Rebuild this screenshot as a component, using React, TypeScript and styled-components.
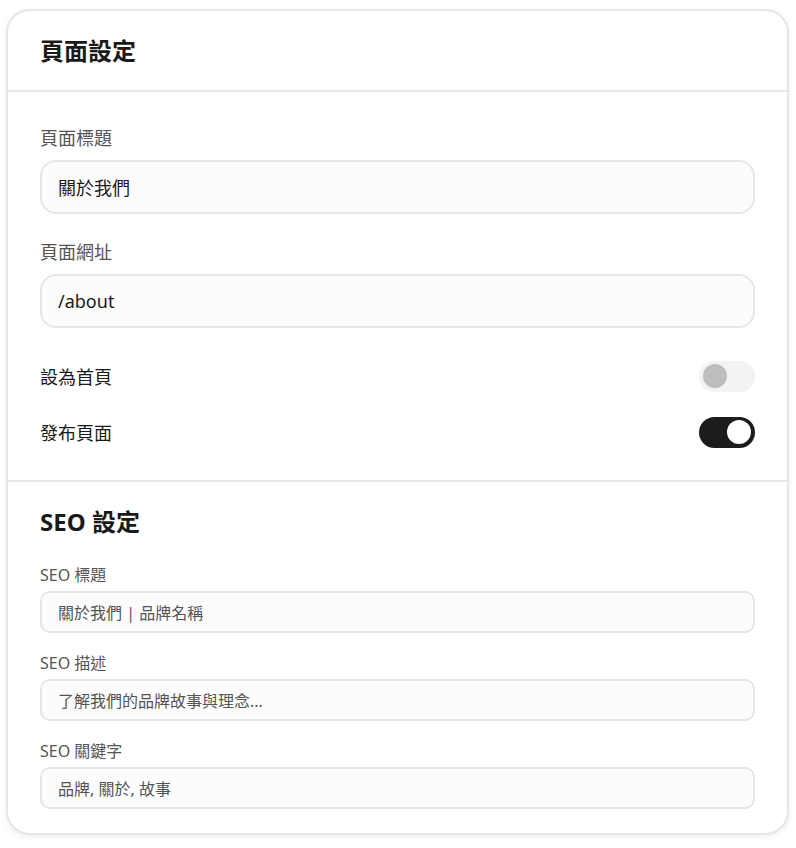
import React, { useState } from 'react'
import styled, { createGlobalStyle } from 'styled-components'

const GlobalStyle = createGlobalStyle`
  html, body {
    margin: 0;
    padding: 0;
    background: #ffffff;
  }
  body {
    font-family: 'Noto Sans', 'Noto Sans CJK TC', sans-serif;
    color: #1a1a1a;
  }
  * {
    box-sizing: border-box;
  }
`

const Page = styled.div`
  padding: 9px 7px 14px 6px;
`

const Card = styled.div`
  background: #ffffff;
  border: 2px solid #e6e6e6;
  border-radius: 24px;
  box-shadow: 0 2px 6px rgba(0, 0, 0, 0.07);
  overflow: hidden;
`

const Header = styled.div`
  padding: 24px 32px;
  border-bottom: 2px solid #e6e6e6;
`

const Title = styled.h2`
  margin: 0;
  font-size: 24px;
  line-height: 31px;
  font-weight: 700;
  color: #1a1a1a;
`

const Section = styled.div<{ $compact?: boolean }>`
  display: flex;
  flex-direction: column;
  padding: ${(p) => (p.$compact ? '24px 32px 24px' : '32px 32px')};
  & + & {
    border-top: 2px solid #e6e6e6;
  }
`

const SectionTitle = styled(Title)`
  margin-bottom: 28px;
`

const Field = styled.div<{ $compact?: boolean }>`
  display: flex;
  flex-direction: column;
  gap: ${(p) => (p.$compact ? '6px' : '8px')};
  margin-bottom: ${(p) => (p.$compact ? '20px' : '24px')};
  &:last-child {
    margin-bottom: 0;
  }
`

const Label = styled.label<{ $compact?: boolean }>`
  font-size: ${(p) => (p.$compact ? '16px' : '18px')};
  line-height: ${(p) => (p.$compact ? '20px' : '28px')};
  color: #555555;
`

const Input = styled.input<{ $compact?: boolean }>`
  width: 100%;
  height: ${(p) => (p.$compact ? '42px' : '54px')};
  padding: 0 16px;
  border: 2px solid #e6e6e6;
  border-radius: ${(p) => (p.$compact ? '10px' : '16px')};
  background: #fcfcfc;
  font-family: inherit;
  font-size: ${(p) => (p.$compact ? '16px' : '18px')};
  color: ${(p) => (p.$compact ? '#555555' : '#1a1a1a')};
  outline: none;
`

const ToggleList = styled.div`
  display: flex;
  flex-direction: column;
  gap: 24px;
  margin-top: 8px;
`

const ToggleRow = styled.div`
  display: flex;
  align-items: center;
  justify-content: space-between;
  height: 32px;
`

const RowLabel = styled.span`
  font-size: 18px;
  color: #1a1a1a;
`

const Track = styled.button<{ $on: boolean }>`
  position: relative;
  width: 56px;
  height: 31px;
  padding: 0;
  border: none;
  border-radius: 16px;
  background: ${(p) => (p.$on ? '#1c1c1c' : '#f3f3f3')};
  cursor: pointer;
`

const Knob = styled.span<{ $on: boolean }>`
  position: absolute;
  top: 3.5px;
  left: ${(p) => (p.$on ? '28px' : '4px')};
  width: 24px;
  height: 24px;
  border-radius: 50%;
  background: ${(p) => (p.$on ? '#ffffff' : '#bdbdbd')};
`

const Toggle = ({ initial }: { initial: boolean }) => {
  const [on, setOn] = useState(initial)
  return (
    <Track $on={on} onClick={() => setOn(!on)}>
      <Knob $on={on} />
    </Track>
  )
}

const seoFields = [
  { label: 'SEO 標題', value: '關於我們 | 品牌名稱' },
  { label: 'SEO 描述', value: '了解我們的品牌故事與理念...' },
  { label: 'SEO 關鍵字', value: '品牌, 關於, 故事' },
]

export default function App() {
  return (
    <Page>
      <GlobalStyle />
      <Card>
        <Header>
          <Title>頁面設定</Title>
        </Header>
        <Section>
          <Field>
            <Label>頁面標題</Label>
            <Input defaultValue="關於我們" />
          </Field>
          <Field>
            <Label>頁面網址</Label>
            <Input defaultValue="/about" />
          </Field>
          <ToggleList>
            <ToggleRow>
              <RowLabel>設為首頁</RowLabel>
              <Toggle initial={false} />
            </ToggleRow>
            <ToggleRow>
              <RowLabel>發布頁面</RowLabel>
              <Toggle initial={true} />
            </ToggleRow>
          </ToggleList>
        </Section>
        <Section $compact>
          <SectionTitle>SEO 設定</SectionTitle>
          {seoFields.map((f) => (
            <Field $compact key={f.label}>
              <Label $compact>{f.label}</Label>
              <Input $compact defaultValue={f.value} />
            </Field>
          ))}
        </Section>
      </Card>
    </Page>
  )
}
